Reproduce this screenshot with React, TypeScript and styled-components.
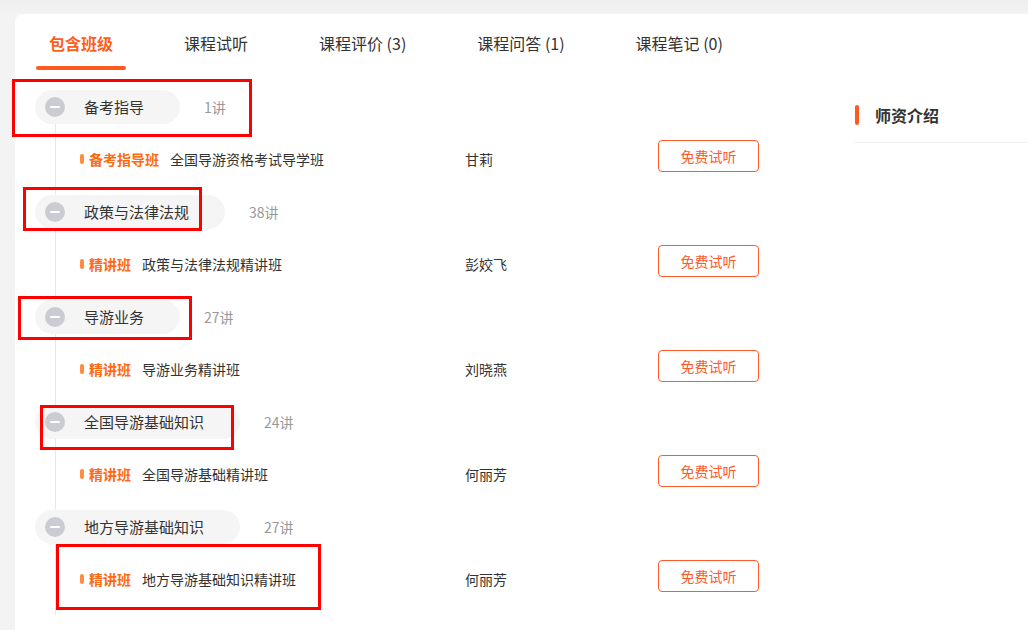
import React from "react";
import styled, { createGlobalStyle } from "styled-components";

const GlobalStyle = createGlobalStyle`
  html, body {
    margin: 0;
    padding: 0;
    background: #f3f3f3;
    font-family: "Noto Sans CJK SC", "Noto Sans", sans-serif;
    color: #333;
  }
  * { box-sizing: border-box; }
`;

const Page = styled.div`
  position: relative;
  width: 1028px;
  height: 630px;
  overflow: hidden;
  padding: 14px 0 0 15px;
  background: linear-gradient(#eeeeee, #f3f3f3 14px);
`;

const Card = styled.div`
  display: flex;
  background: #fff;
  border-radius: 8px;
  height: 640px;
  width: 1040px;
`;

const Main = styled.div`
  width: 840px;
  flex-shrink: 0;
`;

const Tabs = styled.div`
  display: flex;
  gap: 47px;
  padding: 17px 0 0 22px;
`;

const Tab = styled.div<{ $active?: boolean }>`
  display: flex;
  flex-direction: column;
  align-items: stretch;
  padding: 0 12px;
  font-size: 16px;
  line-height: 24px;
  white-space: nowrap;
  color: ${(p) => (p.$active ? "#ff5e1a" : "#333")};
  font-weight: ${(p) => (p.$active ? 700 : 400)};
`;

const TabLine = styled.span`
  display: block;
  height: 4px;
  margin: 11px -13px 0;
  border-radius: 2px;
  background: #ff5a1f;
`;

const List = styled.div`
  margin-top: 20px;
  padding-bottom: 20px;
`;

const GroupRow = styled.div`
  display: flex;
  align-items: center;
  height: 34px;
  margin-left: 20px;
`;

const Pill = styled.div`
  display: flex;
  align-items: center;
  height: 34px;
  border-radius: 17px;
  background: #f5f5f5;
  padding: 0 36px 0 10px;
`;

const MinusIcon = styled.span`
  position: relative;
  display: inline-flex;
  align-items: center;
  justify-content: center;
  width: 20px;
  height: 20px;
  border-radius: 50%;
  background: #cbcbd4;
  margin-right: 19px;
  &::after {
    content: "";
    width: 10px;
    height: 2px;
    border-radius: 1px;
    background: #fff;
  }
`;

const GroupName = styled.span`
  font-size: 15px;
  line-height: 20px;
  color: #333;
  white-space: nowrap;
`;

const Count = styled.span`
  margin-left: 24px;
  font-size: 14px;
  color: #999;
  white-space: nowrap;
`;

const CourseRow = styled.div`
  display: grid;
  grid-template-columns: 385px 193px 101px;
  align-items: start;
  height: 71px;
  margin-left: 40px;
  padding: 16px 0 0 24px;
  border-left: 1px solid #e8e8e8;
`;

const CourseCell = styled.div`
  display: flex;
  align-items: center;
  margin-top: 9px;
  font-size: 14px;
  line-height: 20px;
  white-space: nowrap;
`;

const Mark = styled.span`
  width: 4px;
  height: 10px;
  border-radius: 2px;
  background: #ff8c3f;
  margin-right: 5px;
`;

const Label = styled.span`
  color: #ff6a10;
  font-weight: 700;
  margin-right: 11px;
`;

const CourseName = styled.span`
  color: #333;
`;

const Teacher = styled.div`
  margin-top: 9px;
  font-size: 14px;
  line-height: 20px;
  color: #333;
  white-space: nowrap;
`;

const TrialButton = styled.button`
  width: 101px;
  height: 32px;
  padding: 0;
  border: 1px solid #ff5a2a;
  border-radius: 4px;
  background: #fff;
  color: #ff5a2a;
  font-family: inherit;
  font-size: 14px;
  line-height: 30px;
  cursor: pointer;
`;

const Side = styled.div`
  flex: 1;
  padding-top: 89px;
`;

const SideTitle = styled.div`
  display: flex;
  align-items: center;
  gap: 16px;
  padding-bottom: 15px;
  border-bottom: 1px solid #eeeeee;
  font-size: 16px;
  line-height: 24px;
  font-weight: 600;
  color: #333;
`;

const SideBar = styled.span`
  width: 4px;
  height: 20px;
  border-radius: 2px;
  background: #ff5a1f;
`;

const Annotation = styled.div<{ $x: number; $y: number; $w: number; $h: number }>`
  position: absolute;
  left: ${(p) => p.$x}px;
  top: ${(p) => p.$y}px;
  width: ${(p) => p.$w}px;
  height: ${(p) => p.$h}px;
  border: 3px solid #ff0000;
  pointer-events: none;
`;

const tabs = ["包含班级", "课程试听", "课程评价 (3)", "课程问答 (1)", "课程笔记 (0)"];

const groups = [
  { name: "备考指导", count: "1讲", label: "备考指导班", course: "全国导游资格考试导学班", teacher: "甘莉" },
  { name: "政策与法律法规", count: "38讲", label: "精讲班", course: "政策与法律法规精讲班", teacher: "彭姣飞" },
  { name: "导游业务", count: "27讲", label: "精讲班", course: "导游业务精讲班", teacher: "刘晓燕" },
  { name: "全国导游基础知识", count: "24讲", label: "精讲班", course: "全国导游基础精讲班", teacher: "何丽芳" },
  { name: "地方导游基础知识", count: "27讲", label: "精讲班", course: "地方导游基础知识精讲班", teacher: "何丽芳" },
];

const annotations = [
  { x: 12, y: 79, w: 240, h: 58 },
  { x: 23, y: 187, w: 179, h: 44 },
  { x: 18, y: 296, w: 174, h: 44 },
  { x: 40, y: 405, w: 194, h: 45 },
  { x: 56, y: 544, w: 265, h: 66 },
];

export default function App() {
  return (
    <>
      <GlobalStyle />
      <Page>
        <Card>
          <Main>
            <Tabs>
              {tabs.map((t, i) => (
                <Tab key={t} $active={i === 0}>
                  {t}
                  {i === 0 && <TabLine />}
                </Tab>
              ))}
            </Tabs>
            <List>
              {groups.map((g) => (
                <React.Fragment key={g.name}>
                  <GroupRow>
                    <Pill>
                      <MinusIcon />
                      <GroupName>{g.name}</GroupName>
                    </Pill>
                    <Count>{g.count}</Count>
                  </GroupRow>
                  <CourseRow>
                    <CourseCell>
                      <Mark />
                      <Label>{g.label}</Label>
                      <CourseName>{g.course}</CourseName>
                    </CourseCell>
                    <Teacher>{g.teacher}</Teacher>
                    <TrialButton>免费试听</TrialButton>
                  </CourseRow>
                </React.Fragment>
              ))}
            </List>
          </Main>
          <Side>
            <SideTitle>
              <SideBar />
              师资介绍
            </SideTitle>
          </Side>
        </Card>
        {annotations.map((a, i) => (
          <Annotation key={i} $x={a.x} $y={a.y} $w={a.w} $h={a.h} />
        ))}
      </Page>
    </>
  );
}
